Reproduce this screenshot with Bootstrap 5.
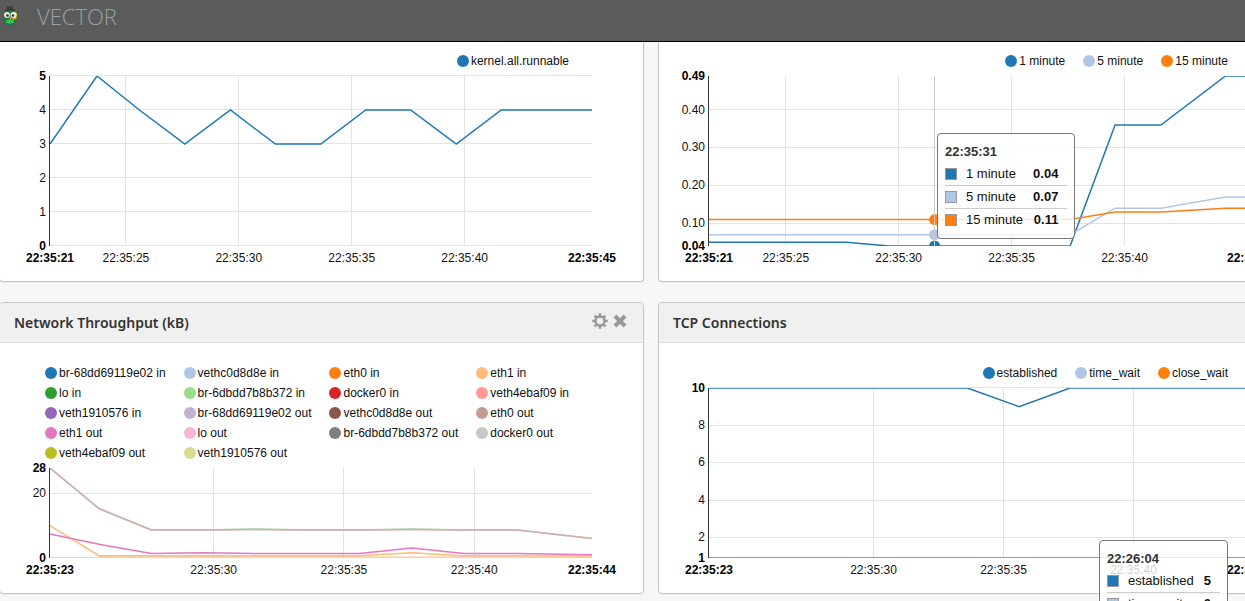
<!DOCTYPE html>
<html lang="en">
<head>
<meta charset="utf-8">
<meta name="viewport" content="width=device-width, initial-scale=1">
<title>Vector</title>
<link href="https://cdn.jsdelivr.net/npm/bootstrap@5.3.0/dist/css/bootstrap.min.css" rel="stylesheet">
<style>
  body { background: #f7f7f7; font-family: "Liberation Sans", Arial, sans-serif; font-size: 12px; line-height: 20px; color: #111; }
  .topbar { height: 42px; background: #5b5b5b; border-bottom: 1px solid #000; }
  .brand-name { font: 300 22px/32px "Open Sans", "Noto Sans", sans-serif; color: #98a2a8; margin-left: 17px; }
  .dashboard { display: grid; grid-template-columns: 1fr 1fr; column-gap: 14px; row-gap: 20px; width: calc(100% + 59px); margin-left: -1px; }
  .panel { border: 1px solid #c4c4c4; border-radius: 4px; box-shadow: 0 1px 1px rgba(0,0,0,.05); background: #fff; }
  .panel-cut { border-top: 0; border-top-left-radius: 0; border-top-right-radius: 0; }
  .panel .card-header { height: 40px; background: #f0f0f0; border-bottom: 1px solid #ddd; padding: 0 15px 0 14px; border-radius: 3px 3px 0 0; }
  .panel-title { font: 600 14px/20px "Noto Sans", sans-serif; color: #333; margin: 0; }
  .tool { border: 0; background: none; padding: 0; width: 16px; height: 16px; display: flex; color: #999; }
  .panel-body { padding-top: 20px; height: 250px; }
  .panel-cut .panel-body { padding-top: 9px; height: 239px; }
  .legend { list-style: none; margin: 0 0 5px; padding: 0 74px 0 0; display: flex; justify-content: flex-end; column-gap: 18px; white-space: nowrap; }
  .legend-grid { display: grid; grid-template-columns: repeat(4, auto); }
  .legend li { display: flex; align-items: center; gap: 2px; }
  .dot { width: 12px; height: 12px; border-radius: 50%; background: var(--c); }
  .chart { position: relative; flex: 1 1 0; min-height: 0; }
  .chart svg { display: block; width: 100%; height: 100%; overflow: visible; }
  .chart text { font-size: 12px; fill: #111; }
  .chart .strong { font-weight: 700; fill: #000; }
  .gridline { stroke: #e3e3e3; }
  .axis { stroke: #333; }
  .guide { stroke: #ccc; }
  .series { fill: none; stroke-width: 1.5; }
  .tip { position: absolute; z-index: 5; background: rgba(255,255,255,.8); border: 1px solid #777; border-radius: 4px; padding: 7px; font-size: 13px; line-height: 22px; white-space: nowrap; }
  .tip table { border-collapse: collapse; }
  .tip caption { caption-side: top; padding: 0; color: #333; font-weight: 700; }
  .tip td { padding: 0; }
  .tip tr + tr td { border-top: 1px solid #ccc; }
  .tip td + td { padding: 0 10px 0 9px; }
  .tip td:last-child { padding: 0 9px 0 0; font-weight: 700; text-align: right; }
  .swatch { display: block; width: 12px; height: 12px; border: 1px solid #999; background: var(--c); }
</style>
</head>
<body>
<div class="vh-100 overflow-hidden position-relative">
  <header class="topbar d-flex align-items-start">
    <svg width="16" height="32" viewBox="0 0 16 32" class="flex-shrink-0 ms-1" overflow="visible" aria-hidden="true">
      <path d="M3 6.500H8.500L8.800 9.500H3Z" fill="#3b3b3b"/>
      <path d="M1 9h10v1.500H1Z" fill="#333"/>
      <path d="M-1 12Q6 9 13 12L12.500 21Q10 25.500 6 25.500Q1 25.500-.5 20Z" fill="#147a45"/>
      <path d="M9 12l4 1-.5 6-4 1Z" fill="#e8a820"/>
      <circle cx="3" cy="15" r="3" fill="#e6e6d8"/><circle cx="9.500" cy="15" r="3" fill="#f0efe0"/>
      <circle cx="3.500" cy="15.500" r="1.300" fill="#333"/><circle cx="9" cy="15.500" r="1.300" fill="#333"/>
      <path d="M5 17h3l-1.500 3Z" fill="#f0a51c"/>
      <ellipse cx="6" cy="21.500" rx="4" ry="2" fill="#43c04e"/>
    </svg>
    <a href="#" class="brand-name text-decoration-none">VECTOR</a>
  </header>

  <main class="dashboard">
    <section class="panel panel-cut" aria-label="Runnable">
      <div class="panel-body d-flex flex-column">
        <ul class="legend"><li style="--c:#1f77b4"><span class="dot"></span>kernel.all.runnable</li></ul>
        <div class="chart" data-chart="runnable"></div>
      </div>
    </section>

    <section class="panel panel-cut" aria-label="Load average">
      <div class="panel-body d-flex flex-column">
        <ul class="legend">
          <li style="--c:#1f77b4"><span class="dot"></span>1 minute</li>
          <li style="--c:#aec7e8"><span class="dot"></span>5 minute</li>
          <li style="--c:#ff7f0e"><span class="dot"></span>15 minute</li>
        </ul>
        <div class="chart" data-chart="load">
          <div class="tip">
            <table>
              <caption>22:35:31</caption>
              <tbody>
                <tr style="--c:#1f77b4"><td><span class="swatch"></span></td><td>1 minute</td><td>0.04</td></tr>
                <tr style="--c:#aec7e8"><td><span class="swatch"></span></td><td>5 minute</td><td>0.07</td></tr>
                <tr style="--c:#ff7f0e"><td><span class="swatch"></span></td><td>15 minute</td><td>0.11</td></tr>
              </tbody>
            </table>
          </div>
        </div>
      </div>
    </section>

    <section class="panel">
      <div class="card-header d-flex align-items-center justify-content-between">
        <h2 class="panel-title">Network Throughput (kB)</h2>
        <div class="d-flex gap-1 mb-1">
          <button class="tool" type="button" aria-label="Settings">
            <svg width="16" height="16" viewBox="0 0 16 16" fill="none" stroke="currentColor">
              <circle cx="8" cy="8" r="4.500" stroke-width="2.400"/>
              <path d="M8 .3v3M8 12.700v3M.3 8h3M12.700 8h3M2.600 2.600l2 2M11.400 11.400l2 2M2.600 13.400l2-2M11.400 4.600l2-2" stroke-width="2.600"/>
            </svg>
          </button>
          <button class="tool" type="button" aria-label="Remove">
            <svg width="16" height="16" viewBox="0 0 16 16" stroke="currentColor" stroke-width="4"><path d="M3 3l10 10M13 3L3 13"/></svg>
          </button>
        </div>
      </div>
      <div class="panel-body d-flex flex-column">
        <ul class="legend legend-grid">
          <li style="--c:#1f77b4"><span class="dot"></span>br-68dd69119e02 in</li>
          <li style="--c:#aec7e8"><span class="dot"></span>vethc0d8d8e in</li>
          <li style="--c:#ff7f0e"><span class="dot"></span>eth0 in</li>
          <li style="--c:#ffbb78"><span class="dot"></span>eth1 in</li>
          <li style="--c:#2ca02c"><span class="dot"></span>lo in</li>
          <li style="--c:#98df8a"><span class="dot"></span>br-6dbdd7b8b372 in</li>
          <li style="--c:#d62728"><span class="dot"></span>docker0 in</li>
          <li style="--c:#ff9896"><span class="dot"></span>veth4ebaf09 in</li>
          <li style="--c:#9467bd"><span class="dot"></span>veth1910576 in</li>
          <li style="--c:#c5b0d5"><span class="dot"></span>br-68dd69119e02 out</li>
          <li style="--c:#8c564b"><span class="dot"></span>vethc0d8d8e out</li>
          <li style="--c:#c49c94"><span class="dot"></span>eth0 out</li>
          <li style="--c:#e377c2"><span class="dot"></span>eth1 out</li>
          <li style="--c:#f7b6d2"><span class="dot"></span>lo out</li>
          <li style="--c:#7f7f7f"><span class="dot"></span>br-6dbdd7b8b372 out</li>
          <li style="--c:#c7c7c7"><span class="dot"></span>docker0 out</li>
          <li style="--c:#bcbd22"><span class="dot"></span>veth4ebaf09 out</li>
          <li style="--c:#dbdb8d"><span class="dot"></span>veth1910576 out</li>
        </ul>
        <div class="chart" data-chart="network"></div>
      </div>
    </section>

    <section class="panel">
      <div class="card-header d-flex align-items-center">
        <h2 class="panel-title">TCP Connections</h2>
      </div>
      <div class="panel-body d-flex flex-column">
        <ul class="legend">
          <li style="--c:#1f77b4"><span class="dot"></span>established</li>
          <li style="--c:#aec7e8"><span class="dot"></span>time_wait</li>
          <li style="--c:#ff7f0e"><span class="dot"></span>close_wait</li>
        </ul>
        <div class="chart" data-chart="tcp">
          <div class="tip">
            <table>
              <caption>22:26:04</caption>
              <tbody>
                <tr style="--c:#1f77b4"><td><span class="swatch"></span></td><td>established</td><td>5</td></tr>
                <tr style="--c:#aec7e8"><td><span class="swatch"></span></td><td>time_wait</td><td>0</td></tr>
              </tbody>
            </table>
          </div>
        </div>
      </div>
    </section>
  </main>
</div>

<script src="https://cdn.jsdelivr.net/npm/bootstrap@5.3.0/dist/js/bootstrap.bundle.min.js"></script>
<script>
  // Points are [second within 22:35, value].
  const charts = {
    runnable: {
      time: [21.64, 45.64], range: [0, 5], xTicks: [25, 30, 35, 40], yTicks: [1, 2, 3, 4], yGrid: [0, 1, 2, 3, 4, 5], digits: 0,
      series: [{ color: '#1f77b4', points: [[21.64,3],[23.72,5],[25.6,4],[27.61,3],[29.63,4],[31.62,3],[33.63,3],[35.62,4],[37.61,4],[39.63,3],[41.62,4],[43.61,4],[45.64,4]] }]
    },
    load: {
      time: [21.6, 45.6], range: [0.04, 0.49], xTicks: [25, 30, 35, 40], yTicks: [0.1, 0.2, 0.3, 0.4], yGrid: [0.1, 0.2, 0.3, 0.4], digits: 2,
      hover: 31.59, tip: [31.68, 0.34],
      series: [
        { color: '#1f77b4', at: 0.04, points: [[21.59,0.05],[27.67,0.05],[29.58,0.04],[37.59,0.04],[39.58,0.36],[41.61,0.36],[44.47,0.49],[45.6,0.49]] },
        { color: '#aec7e8', at: 0.07, points: [[21.59,0.07],[37.59,0.07],[39.58,0.14],[41.61,0.14],[44.47,0.17],[45.6,0.17]] },
        { color: '#ff7f0e', at: 0.11, points: [[21.59,0.11],[37.59,0.11],[39.58,0.13],[41.61,0.13],[44.47,0.14],[45.6,0.14]] }
      ]
    },
    network: {
      time: [23.72, 44.52], range: [0, 28], xTicks: [30, 35, 40], yTicks: [20], yGrid: [20], digits: 0,
      series: [
        { color: '#2ca02c', opacity: .5, points: [[23.72,28],[25.6,15.4],[27.61,8.7],[29.6,8.7],[31.6,9],[33.6,8.7],[35.6,8.7],[37.61,9],[39.6,8.7],[41.66,8.7],[44.52,6.1]] },
        { color: '#e3a5b4', opacity: .85, points: [[23.72,28],[25.6,15.4],[27.61,8.7],[29.6,8.7],[31.6,8.8],[33.6,8.7],[35.6,8.7],[37.61,8.8],[39.6,8.7],[41.66,8.7],[44.52,6.1]] },
        { color: '#dbdb8d', points: [[23.72,0],[44.52,0]] },
        { color: '#ffbb78', opacity: .5, points: [[25.6,0.4],[44.52,0.3]] },
        { color: '#ffbb78', points: [[23.72,10.1],[25.6,0.7],[35.6,0.7],[37.61,1.6],[39.5,0.7],[44.52,0.6]] },
        { color: '#e377c2', points: [[23.72,7.5],[25.6,4.3],[27.61,1.4],[29.6,1.6],[31.6,1.4],[35.6,1.4],[37.61,3.1],[39.6,1.4],[41.66,1.4],[44.52,1]] }
      ]
    },
    tcp: {
      time: [23.67, 44.52], range: [0.9, 10], xTicks: [30, 35, 40], yTicks: [2, 4, 6, 8], yGrid: [2, 4, 6, 8, 10], digits: 0,
      tip: [38.66, 1.86],
      series: [
        { color: '#ff7f0e', points: [[23.67,0.92],[44.52,0.92]] },
        { color: '#1f77b4', points: [[23.67,10],[33.61,10],[35.6,9],[37.56,10],[44.52,10]] }
      ]
    }
  };
  const margin = { left: 50, right: 51, bottom: 35 };

  function draw(host) {
    const name = host.dataset.chart, c = charts[name];
    const w = host.clientWidth - margin.left - margin.right, h = host.clientHeight - margin.bottom;
    const x = t => margin.left + (t - c.time[0]) / (c.time[1] - c.time[0]) * w;
    const y = v => h - (v - c.range[0]) / (c.range[1] - c.range[0]) * h;
    const crisp = n => Math.ceil(n) - 0.5;
    const line = (cls, x1, y1, x2, y2) => `<line class="${cls}" x1="${x1}" y1="${y1}" x2="${x2}" y2="${y2}"/>`;
    const label = (tx, ty, anchor, text, strong) => `<text x="${tx}" y="${Math.floor(ty)}" text-anchor="${anchor}"${strong ? ' class="strong"' : ''}>${text}</text>`;
    const right = margin.left + w;
    let s = `<clipPath id="clip-${name}"><rect x="${margin.left}" y="0" width="${w}" height="${h}"/></clipPath>`;
    c.yGrid.forEach(v => s += line('gridline', margin.left, crisp(y(v)), right, crisp(y(v))));
    c.xTicks.forEach(t => s += line('gridline', crisp(x(t)), 0, crisp(x(t)), h));
    s += line('axis', crisp(margin.left), 0, crisp(margin.left), h);
    s += `<g clip-path="url(#clip-${name})">`;
    c.series.forEach(d => s += `<polyline class="series" stroke="${d.color}" stroke-opacity="${d.opacity || 1}" points="${d.points.map(p => x(p[0]) + ',' + y(p[1])).join(' ')}"/>`);
    if (c.hover) {
      c.series.forEach(d => s += `<circle cx="${x(c.hover)}" cy="${y(d.at)}" r="5.500" fill="${d.color}"/>`);
      s += line('guide', crisp(x(c.hover)), 0, crisp(x(c.hover)), h);
    }
    s += '</g>';
    c.yTicks.forEach(v => s += label(margin.left - 4, y(v) + 4, 'end', v.toFixed(c.digits)));
    c.range.forEach(v => s += label(margin.left - 4, y(v) + 4, 'end', v.toFixed(c.digits), true));
    c.xTicks.forEach(t => s += label(x(t), h + 16, 'middle', '22:35:' + t));
    c.time.forEach(t => s += label(x(t), h + 16, 'middle', '22:35:' + Math.floor(t), true));
    let svg = host.querySelector('svg');
    if (!svg) {
      svg = document.createElementNS('http://www.w3.org/2000/svg', 'svg');
      host.prepend(svg);
    }
    svg.innerHTML = s;
    const tip = host.querySelector('.tip');
    if (tip) {
      tip.style.left = Math.round(x(c.tip[0])) + 'px';
      tip.style.top = Math.round(y(c.tip[1])) + 'px';
    }
  }
  const drawAll = () => document.querySelectorAll('.chart').forEach(draw);
  drawAll();
  window.addEventListener('resize', drawAll);
</script>
</body>
</html>
